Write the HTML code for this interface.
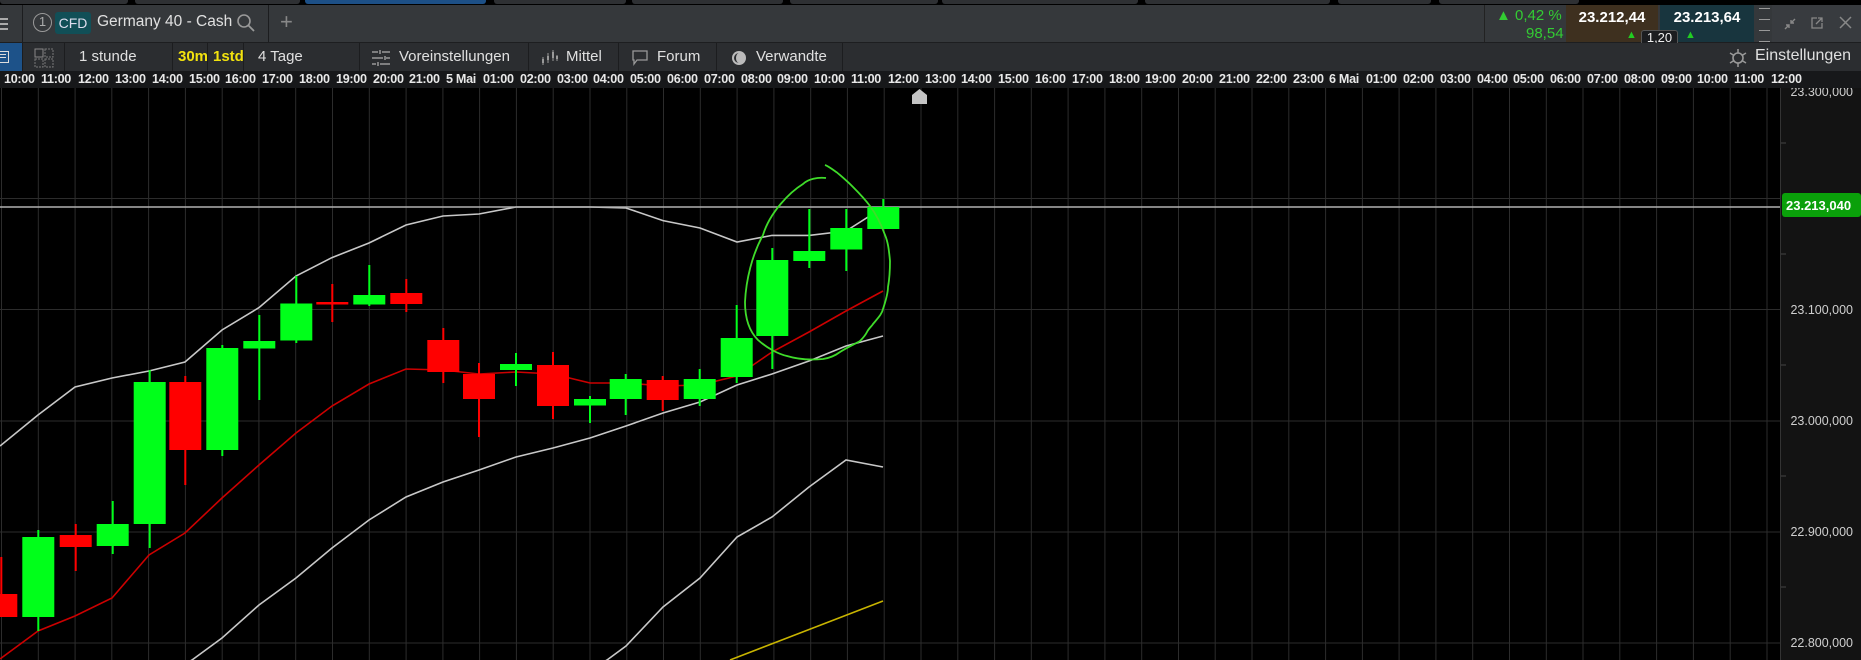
<!DOCTYPE html>
<html><head><meta charset="utf-8"><style>
*{margin:0;padding:0;box-sizing:border-box}
body{width:1861px;height:660px;background:#000;overflow:hidden;position:relative;font-family:"Liberation Sans",Arial,sans-serif;color:#ddd}
.a{position:absolute;white-space:nowrap}
#top{left:0;top:0;width:1861px;height:5px;background:#000}
.tab{position:absolute;top:0;height:4px;background:#2e3033;border-radius:0 0 3px 3px}
#hdr{left:0;top:5px;width:1861px;height:38px;background:#35383b;border-bottom:1px solid #1d1e20}
#tb{left:0;top:43px;width:1861px;height:28px;background:#2b2d30}
#ta{left:0;top:71px;width:1861px;height:17px;background:#17181a}
.dv{position:absolute;top:0;width:1px;height:100%;background:#1c1d1f}
.t{font-size:15px;color:#e0e0e0}
.tl{position:absolute;top:1px;font-size:12.6px;font-weight:bold;color:#e8e8e8;letter-spacing:-0.3px}
</style></head><body>
<div class="a" id="top">
<div class="tab" style="left:0;width:128px"></div>
<div class="tab" style="left:135px;width:165px"></div>
<div class="tab" style="left:305px;width:181px;background:#1c4f86"></div>
<div class="tab" style="left:494px;width:132px"></div>
<div class="tab" style="left:632px;width:151px"></div>
<div class="tab" style="left:790px;width:148px"></div>
<div class="tab" style="left:942px;width:196px"></div>
<div class="tab" style="left:1145px;width:185px"></div>
<div class="tab" style="left:1338px;width:93px"></div>
<div class="tab" style="left:1439px;width:140px"></div>
</div>

<div class="a" id="hdr">
 <div class="a" style="left:0;top:13px;width:8px;height:2px;background:#aaa;box-shadow:0 5px 0 #aaa,0 10px 0 #aaa"></div>
 <div class="dv" style="left:22px"></div>
 <div class="a" style="left:33px;top:8px;width:19px;height:19px;border:1.5px solid #999;border-radius:50%;font-size:13px;color:#aaa;text-align:center;line-height:16px">1</div>
 <div class="a" style="left:55px;top:7px;width:36px;height:22px;background:#114f57;border-radius:3px;font-size:14px;color:#dde;text-align:center;line-height:22px">CFD</div>
 <div class="a t" style="left:97px;top:8px;font-size:15.5px">Germany 40 - Cash</div>
 <svg class="a" style="left:236px;top:8px" width="20" height="20"><circle cx="8" cy="8" r="6" fill="none" stroke="#999" stroke-width="1.6"/><line x1="12.5" y1="12.5" x2="18" y2="18" stroke="#999" stroke-width="1.8"/></svg>
 <div class="dv" style="left:268px"></div>
 <div class="a" style="left:280px;top:4px;font-size:22px;color:#888">+</div>
 <div class="dv" style="left:1484px;background:#222"></div>
 <div class="a" style="left:1496px;top:2px;font-size:15px;color:#33cc33">▲ 0,42 %</div>
 <div class="a" style="left:1526px;top:20px;font-size:15px;color:#33cc33">98,54</div>
 <div class="a" style="left:1566px;top:0;width:92px;height:37px;background:#3e301f"></div>
 <div class="a" style="left:1566px;top:4px;width:92px;text-align:center;font-size:15px;font-weight:bold;color:#fff">23.212,44</div>
 <div class="a" style="left:1660px;top:0;width:94px;height:37px;background:#18353e"></div>
 <div class="a" style="left:1660px;top:4px;width:94px;text-align:center;font-size:15px;font-weight:bold;color:#fff">23.213,64</div>
 <div class="a" style="left:1626px;top:24px;font-size:11px;color:#2c2">▲</div>
 <div class="a" style="left:1685px;top:24px;font-size:11px;color:#2c2">▲</div>
 <div class="a" style="left:1641px;top:25px;width:37px;height:13px;background:#1b1d20;border:1px solid #555;border-bottom:none;border-radius:3px 3px 0 0;font-size:13px;color:#eee;text-align:center;line-height:13px">1,20</div>
 <div class="a" style="left:1759px;top:3px;width:11px;height:1px;background:#999;box-shadow:0 11px 0 #999,0 22px 0 #999,0 33px 0 #999"></div>
 <div class="a" style="left:1772px;top:0;width:89px;height:37px;background:#383b3f"></div>
 <svg class="a" style="left:1783px;top:12px" width="14" height="14"><path d="M12 2 L8 6 M8 3 L8 6 L11 6 M2 12 L6 8 M3 8 L6 8 L6 11" stroke="#888" stroke-width="1.4" fill="none"/></svg>
 <svg class="a" style="left:1810px;top:11px" width="14" height="14"><path d="M7 2 H2 V12 H12 V7 M8 2 H12 V6 M12 2 L6 8" stroke="#888" stroke-width="1.3" fill="none"/></svg>
 <svg class="a" style="left:1839px;top:11px" width="13" height="13"><path d="M1 1 L12 12 M12 1 L1 12" stroke="#888" stroke-width="1.5"/></svg>
</div>

<div class="a" id="tb">
 <div class="a" style="left:0;top:0;width:22px;height:28px;background:#1d5289"></div>
 <div class="a" style="left:0;top:8px;width:9px;height:12px;border:1.5px solid #ddd;border-left:none"></div>
 <div class="a" style="left:0;top:11px;width:6px;height:1px;background:#ddd;box-shadow:0 3px 0 #ddd"></div>
 <div class="dv" style="left:22px"></div>
 <svg class="a" style="left:34px;top:5px" width="20" height="20"><rect x="1" y="1" width="8" height="8" fill="none" stroke="#888"/><rect x="11" y="1" width="8" height="8" fill="none" stroke="#777" stroke-dasharray="2 1"/><rect x="1" y="11" width="8" height="8" fill="none" stroke="#777" stroke-dasharray="2 1"/><rect x="11" y="11" width="8" height="8" fill="none" stroke="#777" stroke-dasharray="2 1"/></svg>
 <div class="dv" style="left:64px"></div>
 <div class="a t" style="left:79px;top:5px">1 stunde</div>
 <div class="dv" style="left:172px"></div>
 <div class="a" style="left:178px;top:5px;font-size:15px;font-weight:bold;color:#f2e20e">30m</div>
 <div class="dv" style="left:207px"></div>
 <div class="a" style="left:213px;top:5px;font-size:15px;font-weight:bold;color:#f2e20e">1std</div>
 <div class="dv" style="left:243px"></div>
 <div class="a t" style="left:258px;top:5px">4 Tage</div>
 <div class="dv" style="left:359px"></div>
 <svg class="a" style="left:372px;top:7px" width="18" height="16"><path d="M0 2H6M10 2H18M0 8H11M14 8H18M0 14H4M8 14H18M8 0V4M13 6V10M6 12V16" stroke="#999" stroke-width="1.5"/></svg>
 <div class="a t" style="left:399px;top:5px">Voreinstellungen</div>
 <div class="dv" style="left:528px"></div>
 <svg class="a" style="left:541px;top:6px" width="18" height="18"><path d="M2 8V16M7 4V14M12 1V12M16 6V12" stroke="#999" stroke-width="1"/><rect x="1" y="10" width="2" height="4" fill="#999"/><rect x="6" y="7" width="2" height="4" fill="#999"/><rect x="11" y="3" width="2" height="6" fill="#999"/><rect x="15" y="7" width="2" height="3" fill="#999"/></svg>
 <div class="a t" style="left:566px;top:5px">Mittel</div>
 <div class="dv" style="left:618px"></div>
 <svg class="a" style="left:632px;top:7px" width="17" height="17"><path d="M1 1H15V10H5L2 14V10H1Z" fill="none" stroke="#999" stroke-width="1.3"/></svg>
 <div class="a t" style="left:657px;top:5px">Forum</div>
 <div class="dv" style="left:716px"></div>
 <svg class="a" style="left:731px;top:7px" width="16" height="16"><circle cx="8" cy="8" r="7" fill="#bbb"/><path d="M8 3 A5 5 0 0 0 8 13 A3 5 0 0 1 8 3" fill="#2b2d30"/></svg>
 <div class="a t" style="left:756px;top:5px">Verwandte</div>
 <div class="dv" style="left:842px"></div>
 <svg class="a" style="left:1729px;top:6px" width="18" height="18"><circle cx="9" cy="9" r="5" fill="none" stroke="#999" stroke-width="1.6"/><path d="M9 0V4M9 14V18M1 4L5 6.5M17 4L13 6.5M1 14L5 11.5M17 14L13 11.5" stroke="#999" stroke-width="1.5"/></svg>
 <div class="a t" style="left:1755px;top:4px;font-size:16px">Einstellungen</div>
</div>

<svg class="a" style="left:0;top:0" width="1861" height="660">
<defs><clipPath id="c"><rect x="0" y="88" width="1780" height="572"/></clipPath></defs>
<g stroke="#2c2c2c" stroke-width="1">
<path d="M1.5 88V660M38.3 88V660M75.1 88V660M111.8 88V660M148.6 88V660M185.4 88V660M222.2 88V660M258.9 88V660M295.7 88V660M332.5 88V660M369.3 88V660M406.1 88V660M442.9 88V660M479.6 88V660M516.4 88V660M553.2 88V660M590 88V660M626.8 88V660M663.5 88V660M700.3 88V660M737.1 88V660M773.9 88V660M810.7 88V660M847.4 88V660M884.2 88V660M921 88V660M957.8 88V660M994.6 88V660M1031.3 88V660M1068.1 88V660M1104.9 88V660M1141.7 88V660M1178.5 88V660M1215.2 88V660M1252 88V660M1288.8 88V660M1325.6 88V660M1362.4 88V660M1399.1 88V660M1435.9 88V660M1472.7 88V660M1509.5 88V660M1546.3 88V660M1583 88V660M1619.8 88V660M1656.6 88V660M1693.4 88V660M1730.2 88V660M1767 88V660"/>
<path d="M0 198.5H1780M0 309.5H1780M0 421H1780M0 532H1780M0 643H1780"/>
</g>
<g clip-path="url(#c)" fill="none" stroke-width="1.6">
<polyline stroke="#c8c8c8" points="0,446 38,415 75,387 112,378 149,371 185,362 222,330 259,307.6 296,276 332,257.6 369,243 406,225 443,216 479,214 516,207 553,207 590,207 626,208 663,220.6 700,228 737,242 772,235.4 809,235.4 846,231 883,207.6"/>
<polyline stroke="#c00" points="0,659 38,631 75,616 112,598 149,555 185,533 222,498 259,465 296,433 332,406 369,384 406,369 443,370 479,374 516,372 553,374 590,383 626,383 663,386 700,385 737,376 772,352 809,332 846,311 883,291"/>
<polyline stroke="#c8c8c8" points="185,664 192,660 222,638 259,605 296,578 332,548 369,520 406,497 443,482 479,470 516,457 553,448 590,438 626,426 663,413 700,402 737,385 772,374 809,361 846,346 883,336"/>
<polyline stroke="#c8c8c8" points="600,664 607,660 626,646 663,607 700,578 737,537 772,517 809,487 846,460 883,467"/>
<polyline stroke="#c8b400" points="730,660 883,601"/>
</g>
<line x1="0" y1="207" x2="1780" y2="207" stroke="#b0b0b0" stroke-width="1.5"/>
<g clip-path="url(#c)">
<g fill="#f00">
<rect x="0.3" y="557" width="2" height="60"/><rect x="-14.7" y="594" width="32" height="23"/>
<rect x="74.7" y="524" width="2" height="47"/><rect x="59.7" y="535" width="32" height="12"/>
<rect x="184.3" y="376" width="2" height="109"/><rect x="169.3" y="382" width="32" height="68"/>
<rect x="331.3" y="284" width="2" height="38"/><rect x="316.3" y="302" width="32" height="2.5"/>
<rect x="405.3" y="279" width="2" height="33"/><rect x="390.3" y="293" width="32" height="11"/>
<rect x="442.3" y="328" width="2" height="55"/><rect x="427.3" y="340" width="32" height="32"/>
<rect x="478" y="363" width="2" height="74"/><rect x="463" y="374" width="32" height="25"/>
<rect x="552" y="352" width="2" height="67"/><rect x="537" y="365" width="32" height="41"/>
<rect x="661.7" y="376" width="2" height="35"/><rect x="646.7" y="380" width="32" height="20"/>
</g>
<g fill="#00ff1a">
<rect x="37.3" y="530" width="2" height="101"/><rect x="22.3" y="537" width="32" height="80"/>
<rect x="111.7" y="501" width="2" height="53"/><rect x="96.7" y="524" width="32" height="22"/>
<rect x="148.7" y="370" width="2" height="178"/><rect x="133.7" y="382" width="32" height="142"/>
<rect x="221.3" y="345" width="2" height="111"/><rect x="206.3" y="348" width="32" height="102"/>
<rect x="258.3" y="315" width="2" height="85"/><rect x="243.3" y="341" width="32" height="7.5"/>
<rect x="295.3" y="276" width="2" height="67"/><rect x="280.3" y="303.5" width="32" height="37"/>
<rect x="368.3" y="265" width="2" height="41"/><rect x="353.3" y="295" width="32" height="9.5"/>
<rect x="515" y="353" width="2" height="33"/><rect x="500" y="364" width="32" height="6"/>
<rect x="589" y="396" width="2" height="27"/><rect x="574" y="399" width="32" height="6.5"/>
<rect x="624.7" y="374" width="2" height="41"/><rect x="609.7" y="379" width="32" height="20"/>
<rect x="698.7" y="369" width="2" height="37"/><rect x="683.7" y="379" width="32" height="20"/>
<rect x="735.7" y="305" width="2" height="78"/><rect x="720.7" y="338" width="32" height="39"/>
<rect x="771.3" y="248" width="2" height="121"/><rect x="756.3" y="260" width="32" height="76"/>
<rect x="808.3" y="209" width="2" height="59"/><rect x="793.3" y="251" width="32" height="10"/>
<rect x="845.3" y="209" width="2" height="62"/><rect x="830.3" y="228" width="32" height="21.5"/>
<rect x="882.3" y="199" width="2" height="30"/><rect x="867.3" y="207" width="32" height="22"/>
</g>
<path d="M826,178 C818,177 808,179 803,184 C790,192 770,212 763,235 C752,255 746,280 745,302 C745,320 750,332 758,340 C767,348 778,354 787,356 C800,360 812,360 823,359 C830,358 836,355 840,352 C848,347 855,344 860,341 C864,337 866,334 867,332 C869,328 872,326 873,324 C878,318 882,314 883,309 C886,300 888,292 888,287 C890,276 890,268 890,261 C889,250 888,242 885,235 C881,224 876,214 870,206 C864,198 858,192 853,187 C846,180 841,176 837,172.5 C832,169 828,166 825,165" fill="none" stroke="#3fdc2a" stroke-width="1.8"/>
</g>
<path d="M912,95 L919.5,89 L927,95 V104 H912 Z" fill="#c4c4c4"/>
<rect x="1780" y="88" width="81" height="572" fill="#131313"/>
<line x1="1780.5" y1="88" x2="1780.5" y2="660" stroke="#333"/>
<g stroke="#444"><path d="M1781 143H1786M1781 254H1786M1781 365H1786M1781 476H1786M1781 587H1786"/></g>
<g font-family="Liberation Sans, Arial, sans-serif" font-size="12.5" fill="#cfcfcf" text-anchor="end">
<text x="1853" y="96">23.300,000</text>
<text x="1853" y="314">23.100,000</text>
<text x="1853" y="425">23.000,000</text>
<text x="1853" y="536">22.900,000</text>
<text x="1853" y="647">22.800,000</text>
</g>
<rect x="1782" y="193" width="79" height="24" rx="3" fill="#0aa00a"/>
<text x="1786" y="210" font-family="Liberation Sans, Arial, sans-serif" font-size="13" font-weight="bold" fill="#fff">23.213,040</text>
</svg>

<div class="a" id="ta">
<div class="tl" style="left:4px">10:00</div><div class="tl" style="left:41px">11:00</div><div class="tl" style="left:78px">12:00</div><div class="tl" style="left:115px">13:00</div><div class="tl" style="left:152px">14:00</div><div class="tl" style="left:189px">15:00</div><div class="tl" style="left:225px">16:00</div><div class="tl" style="left:262px">17:00</div><div class="tl" style="left:299px">18:00</div><div class="tl" style="left:336px">19:00</div><div class="tl" style="left:373px">20:00</div><div class="tl" style="left:409px">21:00</div><div class="tl" style="left:446px">5 Mai</div><div class="tl" style="left:483px">01:00</div><div class="tl" style="left:520px">02:00</div><div class="tl" style="left:557px">03:00</div><div class="tl" style="left:593px">04:00</div><div class="tl" style="left:630px">05:00</div><div class="tl" style="left:667px">06:00</div><div class="tl" style="left:704px">07:00</div><div class="tl" style="left:741px">08:00</div><div class="tl" style="left:777px">09:00</div><div class="tl" style="left:814px">10:00</div><div class="tl" style="left:851px">11:00</div><div class="tl" style="left:888px">12:00</div><div class="tl" style="left:925px">13:00</div><div class="tl" style="left:961px">14:00</div><div class="tl" style="left:998px">15:00</div><div class="tl" style="left:1035px">16:00</div><div class="tl" style="left:1072px">17:00</div><div class="tl" style="left:1109px">18:00</div><div class="tl" style="left:1145px">19:00</div><div class="tl" style="left:1182px">20:00</div><div class="tl" style="left:1219px">21:00</div><div class="tl" style="left:1256px">22:00</div><div class="tl" style="left:1293px">23:00</div><div class="tl" style="left:1329px">6 Mai</div><div class="tl" style="left:1366px">01:00</div><div class="tl" style="left:1403px">02:00</div><div class="tl" style="left:1440px">03:00</div><div class="tl" style="left:1477px">04:00</div><div class="tl" style="left:1513px">05:00</div><div class="tl" style="left:1550px">06:00</div><div class="tl" style="left:1587px">07:00</div><div class="tl" style="left:1624px">08:00</div><div class="tl" style="left:1661px">09:00</div><div class="tl" style="left:1697px">10:00</div><div class="tl" style="left:1734px">11:00</div><div class="tl" style="left:1771px">12:00</div>
</div>
</body></html>
